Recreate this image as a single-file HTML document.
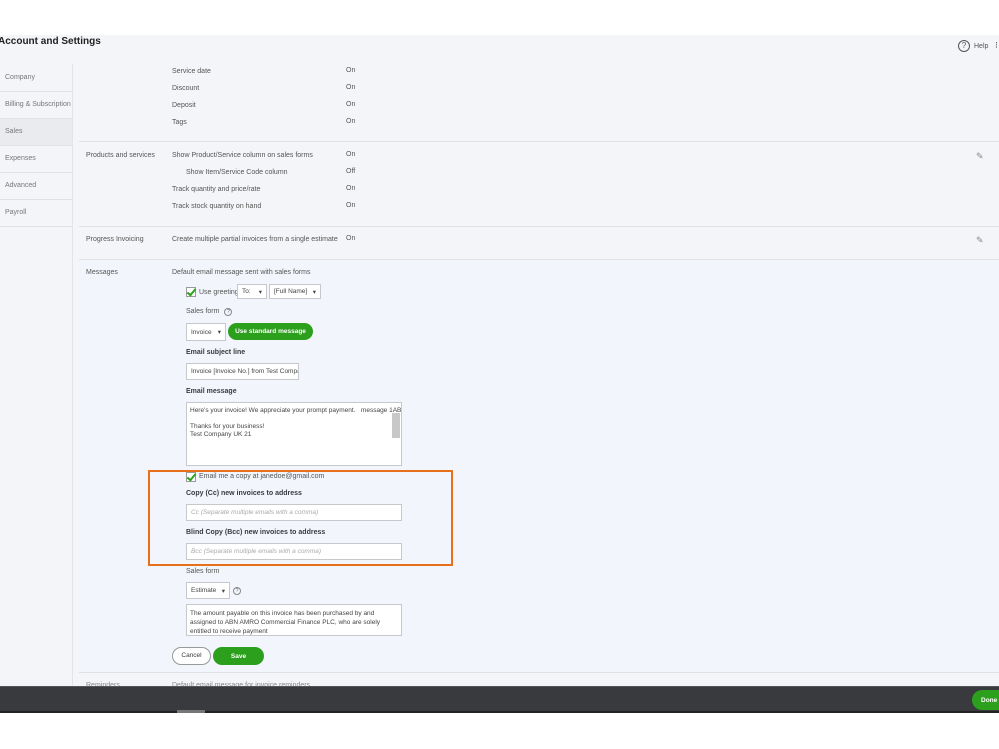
<!DOCTYPE html>
<html><head><meta charset="utf-8"><style>
*{margin:0;padding:0;box-sizing:border-box}
body{width:999px;height:749px;background:#fff;position:relative;overflow:hidden;font-family:"Liberation Sans",sans-serif;color:#393a3d}
.a{position:absolute;white-space:nowrap}
.t{font-size:7px;color:#555}
.b{font-size:7px;font-weight:bold;color:#393a3d}
.side{font-size:7px;color:#777;left:5px}
.hl{position:absolute;height:1px;background:#dfe1e5}
.inp{position:absolute;background:#fff;border:1px solid #c6c8cc;font-size:6.5px;color:#444;padding:0 4px;display:flex;align-items:center;white-space:nowrap;overflow:hidden}
.cb{position:absolute;width:10px;height:10px;background:#fff;border:1px solid #9a9a9a}
.cb:after{content:"";position:absolute;left:2px;top:-1px;width:3px;height:7px;border:solid #2ca01c;border-width:0 2px 2px 0;transform:rotate(40deg)}
.btn{position:absolute;background:#2ca01c;color:#fff;font-size:6.5px;font-weight:bold;border-radius:9px;display:flex;align-items:center;justify-content:center;white-space:nowrap}
</style></head><body>
<div class="a" style="left:0;top:35px;width:999px;height:651px;background:#f4f5f8"></div>
<div class="a" style="left:-2px;top:36px;font-size:10px;font-weight:bold;color:#222">Account and Settings</div>
<div class="a" style="left:958px;top:40px;width:12px;height:12px;border:1.2px solid #555;border-radius:50%;font-size:8px;text-align:center;line-height:10px;color:#555">?</div>
<div class="a t" style="left:974px;top:43px">Help</div>
<div class="a" style="left:995px;top:40px;font-size:9px">⁝</div>
<!-- sidebar -->
<div class="a" style="left:72px;top:64px;width:1px;height:622px;background:#e2e4e8"></div>
<div class="a" style="left:0;top:118px;width:72px;height:27px;background:#eaebee"></div>
<div class="hl" style="left:0;top:91px;width:72px"></div>
<div class="hl" style="left:0;top:118px;width:72px"></div>
<div class="hl" style="left:0;top:145px;width:72px"></div>
<div class="hl" style="left:0;top:172px;width:72px"></div>
<div class="hl" style="left:0;top:199px;width:72px"></div>
<div class="hl" style="left:0;top:226px;width:72px"></div>
<div class="a side" style="top:74px">Company</div>
<div class="a side" style="top:101px">Billing &amp; Subscription</div>
<div class="a side" style="top:128px">Sales</div>
<div class="a side" style="top:155px">Expenses</div>
<div class="a side" style="top:182px">Advanced</div>
<div class="a side" style="top:209px">Payroll</div>
<!-- rows -->
<div class="a t" style="left:172px;top:68px">Service date</div><div class="a t" style="left:346px;top:67px">On</div>
<div class="a t" style="left:172px;top:85px">Discount</div><div class="a t" style="left:346px;top:84px">On</div>
<div class="a t" style="left:172px;top:102px">Deposit</div><div class="a t" style="left:346px;top:101px">On</div>
<div class="a t" style="left:172px;top:119px">Tags</div><div class="a t" style="left:346px;top:118px">On</div>
<div class="hl" style="left:79px;top:141px;width:920px"></div>
<div class="a t" style="left:86px;top:152px">Products and services</div>
<div class="a t" style="left:172px;top:152px">Show Product/Service column on sales forms</div><div class="a t" style="left:346px;top:151px">On</div>
<div class="a t" style="left:186px;top:169px">Show Item/Service Code column</div><div class="a t" style="left:346px;top:168px">Off</div>
<div class="a t" style="left:172px;top:186px">Track quantity and price/rate</div><div class="a t" style="left:346px;top:185px">On</div>
<div class="a t" style="left:172px;top:203px">Track stock quantity on hand</div><div class="a t" style="left:346px;top:202px">On</div>
<div class="a" style="left:976px;top:151px;font-size:9px;color:#888">✎</div>
<div class="hl" style="left:79px;top:226px;width:920px"></div>
<div class="a t" style="left:86px;top:236px">Progress Invoicing</div>
<div class="a t" style="left:172px;top:236px">Create multiple partial invoices from a single estimate</div><div class="a t" style="left:346px;top:235px">On</div>
<div class="a" style="left:976px;top:235px;font-size:9px;color:#888">✎</div>
<div class="hl" style="left:79px;top:259px;width:920px"></div>
<!-- messages -->
<div class="a" style="left:79px;top:260px;width:920px;height:412px;background:#f2f6fc"></div>
<div class="hl" style="left:79px;top:672px;width:920px"></div>
<div class="a t" style="left:86px;top:269px">Messages</div>
<div class="a t" style="left:172px;top:269px">Default email message sent with sales forms</div>
<div class="cb" style="left:186px;top:287px"></div>
<div class="a t" style="left:199px;top:289px">Use greeting</div>
<div class="inp" style="left:237px;top:284px;width:30px;height:15px">To:<span style="margin-left:auto">▾</span></div>
<div class="inp" style="left:269px;top:284px;width:52px;height:15px">[Full Name]<span style="margin-left:auto">▾</span></div>
<div class="a t" style="left:186px;top:308px">Sales form <span style="display:inline-block;width:8px;height:8px;border:1px solid #888;border-radius:50%;font-size:5px;text-align:center;line-height:6px;margin-left:3px">?</span></div>
<div class="inp" style="left:186px;top:323px;width:40px;height:18px">Invoice<span style="margin-left:auto">▾</span></div>
<div class="btn" style="left:228px;top:323px;width:85px;height:17px">Use standard message</div>
<div class="a b" style="left:186px;top:349px">Email subject line</div>
<div class="inp" style="left:186px;top:363px;width:113px;height:17px">Invoice [Invoice No.] from Test Compar</div>
<div class="a b" style="left:186px;top:388px">Email message</div>
<div class="a" style="left:186px;top:402px;width:216px;height:64px;background:#fff;border:1px solid #c6c8cc;font-size:6.5px;color:#444;padding:4px 3px;line-height:8px;white-space:pre;overflow:hidden">Here's your invoice! We appreciate your prompt payment.   message 1AB

Thanks for your business!
Test Company UK 21</div>
<div class="a" style="left:392px;top:413px;width:8px;height:25px;background:#c8c8c8"></div>
<div class="cb" style="left:186px;top:472px"></div>
<div class="a t" style="left:199px;top:473px">Email me a copy at janedoe@gmail.com</div>
<div class="a b" style="left:186px;top:490px">Copy (Cc) new invoices to address</div>
<div class="inp" style="left:186px;top:504px;width:216px;height:17px;color:#aaa;font-style:italic">Cc (Separate multiple emails with a comma)</div>
<div class="a b" style="left:186px;top:529px">Blind Copy (Bcc) new invoices to address</div>
<div class="inp" style="left:186px;top:543px;width:216px;height:17px;color:#aaa;font-style:italic">Bcc (Separate multiple emails with a comma)</div>
<div class="a" style="left:148px;top:470px;width:305px;height:96px;border:2px solid #e8701a"></div>
<div class="a t" style="left:186px;top:568px">Sales form</div>
<div class="inp" style="left:186px;top:582px;width:44px;height:17px">Estimate<span style="margin-left:auto">▾</span></div>
<div class="a" style="left:233px;top:587px;width:8px;height:8px;border:1px solid #888;border-radius:50%;font-size:5px;text-align:center;line-height:6px;color:#666">?</div>
<div class="a" style="left:186px;top:604px;width:216px;height:32px;background:#fff;border:1px solid #c6c8cc;font-size:6.5px;color:#444;padding:4px 3px;line-height:9px;overflow:hidden;white-space:normal">The amount payable on this invoice has been purchased by and assigned to ABN AMRO Commercial Finance PLC, who are solely entitled to receive payment</div>
<div class="a" style="left:172px;top:647px;width:39px;height:18px;border:1px solid #999;border-radius:9px;background:#fff;font-size:6.5px;text-align:center;line-height:16px">Cancel</div>
<div class="btn" style="left:213px;top:647px;width:51px;height:18px">Save</div>
<div class="a t" style="left:86px;top:682px;color:#888">Reminders</div>
<div class="a t" style="left:172px;top:682px;color:#888">Default email message for invoice reminders</div>
<!-- footer -->
<div class="a" style="left:0;top:686px;width:999px;height:27px;background:#393a3d;border-top:1px solid #555;border-bottom:2px solid #222"></div>
<div class="a" style="left:177px;top:710px;width:28px;height:3px;background:#777"></div>
<div class="btn" style="left:972px;top:690px;width:40px;height:20px;border-radius:10px;justify-content:flex-start;padding-left:9px">Done</div>
</body></html>
